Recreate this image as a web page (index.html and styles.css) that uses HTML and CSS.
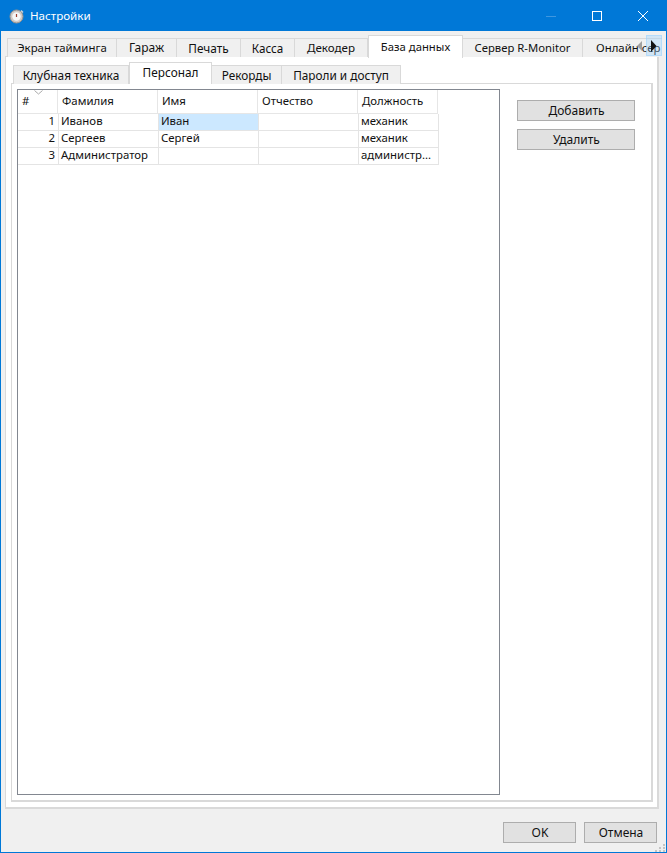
FILE: index.html
```html
<!DOCTYPE html>
<html lang="ru">
<head>
<meta charset="utf-8">
<title>Настройки</title>
<link rel="stylesheet" href="styles.css">
</head>
<body>
<div class="window">
  <header class="titlebar">
    <svg class="app-icon" width="16" height="16" viewBox="0 0 16 16">
      <circle cx="7.5" cy="8.5" r="6.5" fill="#cfcac6" stroke="#9a9490"/>
      <circle cx="7.5" cy="8.5" r="4.2" fill="#f7f7f7"/>
      <path d="M7.5 9V6" stroke="#a0402f" stroke-width="1.2"/>
      <path d="M12 2.5l2 2" stroke="#cfd6dc" stroke-width="1.4"/>
    </svg>
    <span class="title-text">Настройки</span>
    <div class="controls">
      <svg class="ctl ctl-min" width="10" height="10" viewBox="0 0 10 10"><path d="M0 5.5h10" stroke="#3f97e0"/></svg>
      <svg class="ctl" width="10" height="10" viewBox="0 0 10 10"><rect x=".5" y=".5" width="9" height="9" fill="none" stroke="#fff"/></svg>
      <svg class="ctl" width="10" height="10" viewBox="0 0 10 10"><path d="M0 0l10 10M10 0L0 10" stroke="#fff"/></svg>
    </div>
  </header>
  <main class="client">
    <div class="tabstrip">
      <span class="tab tab-w1">Экран тайминга</span>
      <span class="tab tab-w2">Гараж</span>
      <span class="tab tab-w3">Печать</span>
      <span class="tab tab-w4">Касса</span>
      <span class="tab tab-w5">Декодер</span>
      <span class="tab tab-w6 tab-active">База данных</span>
      <span class="tab tab-w7">Сервер R-Monitor</span>
      <span class="tab tab-w8">Онлайн сер</span>
      <div class="scroll-nav">
        <svg class="nav-left" width="8" height="12" viewBox="0 0 8 12"><path d="M7 1v10L2 6z" fill="#a0a0a0"/></svg>
        <span class="nav-right"><svg width="8" height="12" viewBox="0 0 8 12"><path d="M1 0v12l5.5-6z" fill="#111"/></svg></span>
      </div>
    </div>
    <section class="outer-pane">
      <div class="subtabs">
        <span class="subtab sub-w1">Клубная техника</span>
        <span class="subtab sub-w2 subtab-active">Персонал</span>
        <span class="subtab sub-w3">Рекорды</span>
        <span class="subtab sub-w4">Пароли и доступ</span>
      </div>
      <div class="inner-pane">
        <div class="grid-box">
          <div class="grid-head">
            <span class="hc c-num">#<svg class="sort" width="9" height="5" viewBox="0 0 9 5"><path d="M.5.5l4 3.5 4-3.5" fill="none" stroke="#a9a9a9"/></svg></span>
            <span class="hc c-w">Фамилия</span>
            <span class="hc c-w">Имя</span>
            <span class="hc c-w">Отчество</span>
            <span class="hc c-l">Должность</span>
          </div>
          <div class="grid-row">
            <span class="cell c-num1 right">1</span>
            <span class="cell c-w">Иванов</span>
            <span class="cell c-w selected">Иван</span>
            <span class="cell c-w"></span>
            <span class="cell c-l">механик</span>
          </div>
          <div class="grid-row">
            <span class="cell c-num1 right">2</span>
            <span class="cell c-w">Сергеев</span>
            <span class="cell c-w">Сергей</span>
            <span class="cell c-w"></span>
            <span class="cell c-l">механик</span>
          </div>
          <div class="grid-row">
            <span class="cell c-num1 right">3</span>
            <span class="cell c-w">Администратор</span>
            <span class="cell c-w"></span>
            <span class="cell c-w"></span>
            <span class="cell c-l">администр...</span>
          </div>
        </div>
        <div class="side-actions">
          <button class="btn btn-side">Добавить</button>
          <button class="btn btn-side">Удалить</button>
        </div>
      </div>
    </section>
    <footer class="footer">
      <button class="btn btn-foot">OK</button>
      <button class="btn btn-foot">Отмена</button>
    </footer>
    <svg class="grip" width="11" height="8" viewBox="0 0 11 8"><path d="M8 0h2v2H8zM4 3h2v2H4zM8 3h2v2H8zM0 6h2v2H0zM4 6h2v2H4zM8 6h2v2H8z" fill="#c4c4c4"/></svg>
  </main>
</div>
</body>
</html>
```
FILE: styles.css
```css
* { box-sizing: border-box; }
html, body { margin: 0; padding: 0; }
body { width: 667px; height: 853px; overflow: hidden; font-family: "Noto Sans", "Open Sans", sans-serif; font-size: 12px; color: #111; }
.window { width: 667px; height: 853px; display: flex; flex-direction: column; background: #f0f0f0; border: 1px solid #0078d7; border-top: 0; }
.titlebar { height: 31px; flex: none; display: flex; align-items: center; padding-left: 8px; background: #0078d7; color: #fff; }
.app-icon { flex: none; margin-right: 5px; }
.title-text { font-size: 11.6px; }
.controls { margin-left: auto; display: flex; align-items: center; }
.ctl { width: 10px; height: 10px; margin: 0 18px; }
.client { position: relative; flex: 1; display: flex; flex-direction: column; padding: 4px 7px 9px 4px; min-height: 0; }
.tabstrip { position: relative; z-index: 1; height: 23px; width: 657px; padding-left: 2px; display: flex; align-items: flex-end; overflow: hidden; flex: none; margin-bottom: -2px; }
.tab { flex: none; height: 19px; margin-bottom: 1px; padding-top: 1px; text-align: center; white-space: nowrap; overflow: hidden; background: #f0f0f0; border: 1px solid #d9d9d9; border-left: 0; border-bottom: 0; line-height: 16px; }
.tab:first-child { border-left: 1px solid #d9d9d9; }
.tab-w1 { width: 110px; font-size: 11.4px; }
.tab-w2 { width: 60px; }
.tab-w3 { width: 64px; font-size: 11.8px; }
.tab-w4 { width: 54px; font-size: 11.7px; }
.tab-w5 { width: 73px; font-size: 11.6px; }
.tab-w6 { width: 95px; font-size: 11.3px; }
.tab-w7 { width: 120px; font-size: 11.3px; }
.tab-w8 { width: 79px; font-size: 11.4px; text-align: left; padding-left: 13px; border-right: 0; }
.tab-active { height: 23px; margin-bottom: 0; padding-top: 3px; background: #fff; border-left: 1px solid #d9d9d9; position: relative; }
.scroll-nav { position: absolute; right: 0; top: 0; height: 21px; display: flex; align-items: center; }
.nav-left { margin-right: 3px; }
.nav-right { width: 16px; height: 21px; display: flex; align-items: center; justify-content: center; background: rgba(153, 209, 255, .35); border: 1px solid rgba(153, 209, 255, .5); }
.outer-pane { flex: 1; min-height: 0; display: flex; flex-direction: column; background: #fff; border: 1px solid #d9d9d9; border-right-width: 2px; border-bottom-width: 2px; padding: 5px 4px 5px 5px; }
.subtabs { position: relative; z-index: 1; height: 22px; padding-left: 2px; display: flex; align-items: flex-end; flex: none; margin-bottom: -1px; }
.subtab { flex: none; height: 19px; text-align: center; white-space: nowrap; background: #f0f0f0; border: 1px solid #d9d9d9; border-left: 0; border-bottom: 0; line-height: 18px; }
.subtab:first-child { border-left: 1px solid #d9d9d9; }
.sub-w1 { width: 116px; font-size: 11.9px; }
.sub-w2 { width: 83px; font-size: 11.8px; }
.sub-w3 { width: 70px; font-size: 11.8px; }
.sub-w4 { width: 119px; font-size: 11.8px; }
.subtab-active { height: 22px; background: #fff; border-left: 1px solid #d9d9d9; }
.inner-pane { flex: 1; min-height: 0; display: flex; align-items: flex-start; background: #fff; border: 1px solid #d9d9d9; border-right-width: 2px; border-bottom-width: 2px; padding: 5px 18px 5px 5px; }
.grid-box { align-self: stretch; width: 483px; flex: none; background: #fff; border: 1px solid #828790; font-size: 11.4px; }
.grid-head { display: flex; width: 420px; height: 24px; background: #fff; border-bottom: 1px solid #e6e6e6; }
.hc { position: relative; height: 23px; padding: 3px 0 0 4px; border-right: 1px solid #e6e6e6; line-height: 16px; white-space: nowrap; }
.c-num { width: 40px; }
.c-w { width: 100px; }
.c-l { width: 80px; }
.c-num1 { width: 41px; }
.sort { position: absolute; left: 16px; top: 0; }
.grid-row { display: flex; height: 17px; }
.cell { height: 17px; padding: 0 3px 0 2px; line-height: 13px; border-right: 1px solid #e4e4e4; border-bottom: 1px solid #e4e4e4; white-space: nowrap; overflow: hidden; }
.right { text-align: right; }
.selected { background: #cce8ff; border-color: #e4e4e4; }
.side-actions { margin-left: 17px; margin-top: 11px; display: flex; flex-direction: column; gap: 8px; }
.btn { font: inherit; color: #111; background: #e1e1e1; border: 1px solid #adadad; padding: 0 0 0 1px; height: 21px; line-height: 19px; margin: 0; }
.btn-side { width: 118px; }
.footer { flex: none; height: 34px; padding: 13px 2px 0 0; display: flex; justify-content: flex-end; gap: 8px; }
.btn-foot { width: 73px; }
.grip { position: absolute; right: 0; bottom: 0; }
```
